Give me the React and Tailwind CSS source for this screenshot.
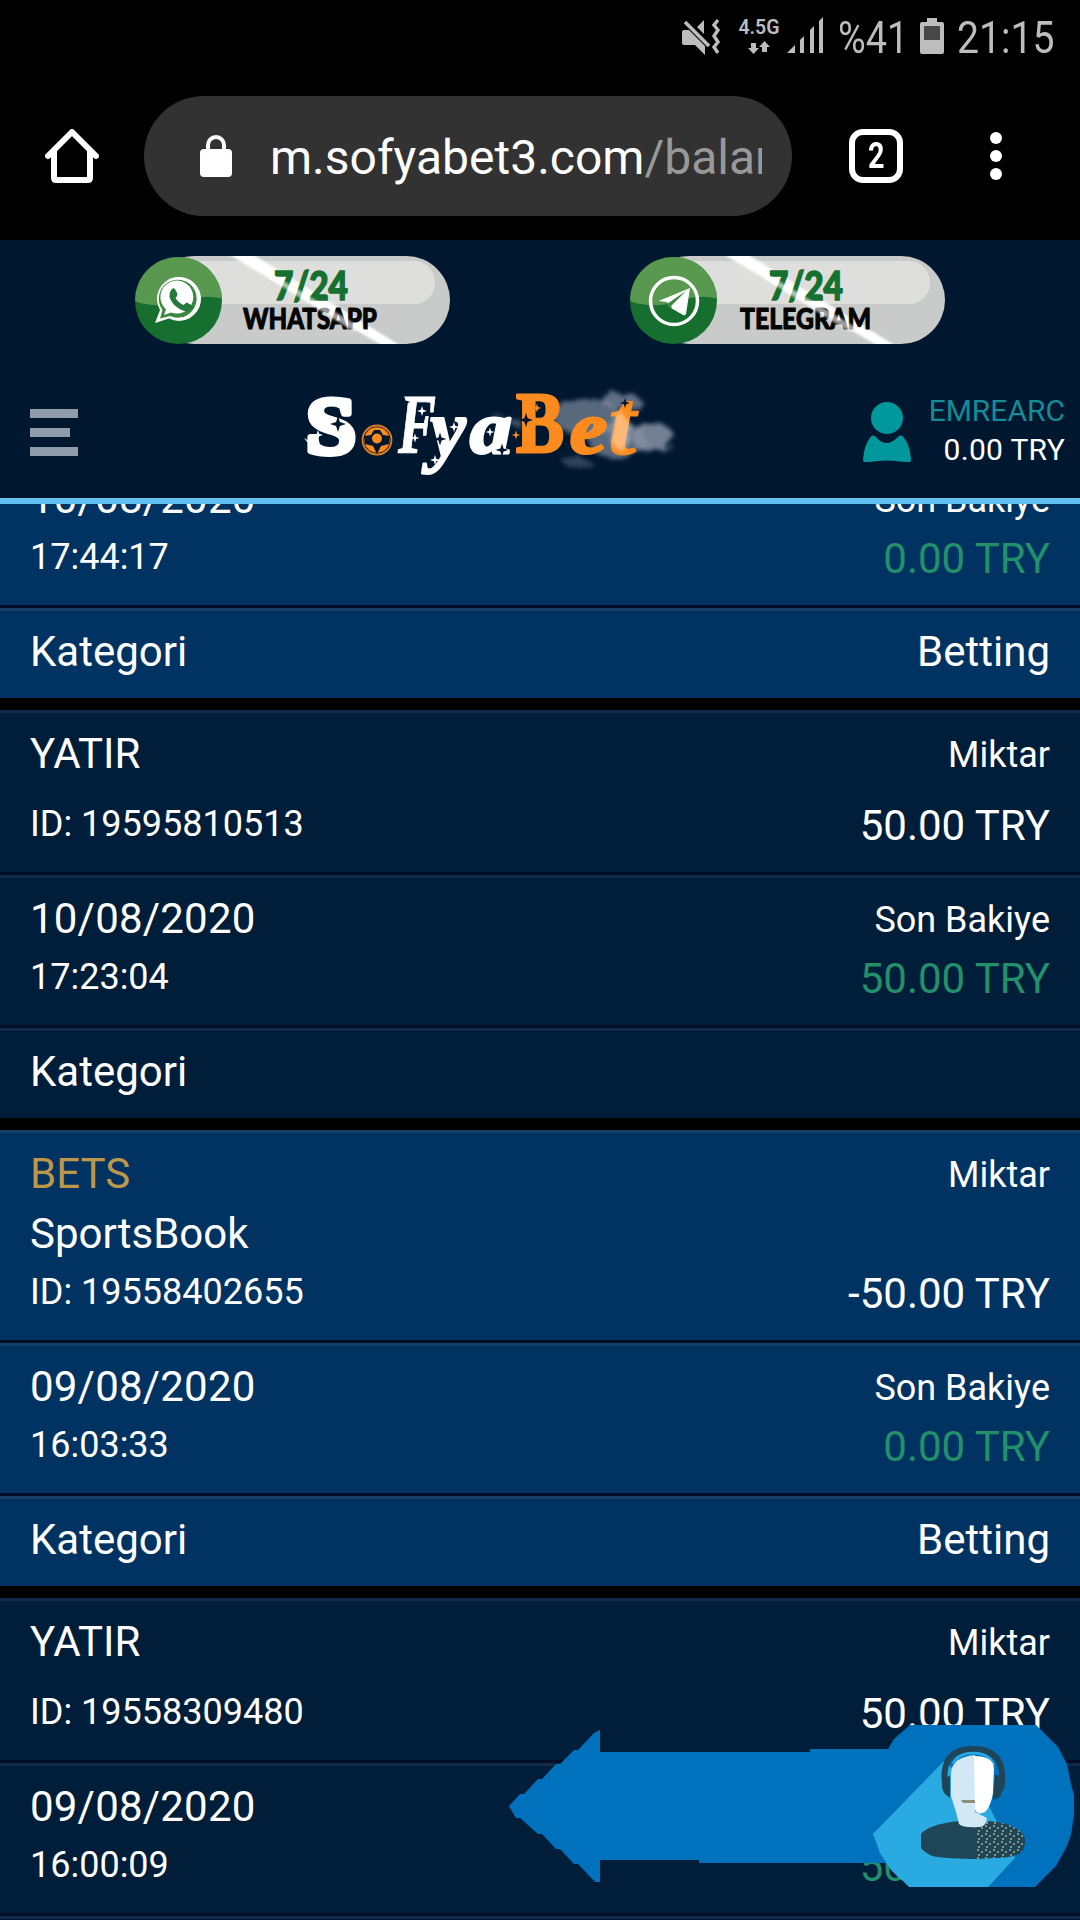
const transactions = [
  { id: 1, rows: ['date', 'category'], date: '10/08/2020', time: '17:44:17', balance: '0.00 TRY', category: 'Betting', highlighted: true },
  { id: 2, rows: ['amount', 'date', 'category'], type: 'YATIR', ref: '19595810513', amount: '50.00 TRY', date: '10/08/2020', time: '17:23:04', balance: '50.00 TRY', category: '' },
  { id: 3, rows: ['amount', 'date', 'category'], type: 'BETS', product: 'SportsBook', ref: '19558402655', amount: '-50.00 TRY', date: '09/08/2020', time: '16:03:33', balance: '0.00 TRY', category: 'Betting', highlighted: true },
  { id: 4, rows: ['amount', 'date', 'category'], type: 'YATIR', ref: '19558309480', amount: '50.00 TRY', date: '09/08/2020', time: '16:00:09', balance: '50.00 TRY', category: '' },
];

function StatusBar() {
  return (
    <div className="flex h-20 shrink-0 items-start bg-black pl-[682px] pt-[18px] text-[#bdbdbd]">
      <svg className="h-[38px] w-[39px] shrink-0" viewBox="0 0 39 38" fill="currentColor">
        <path d="M0 14q0-2 2-2h5l16 16v9l-10-10H2q-2 0-2-2zM15 9l7-7v14z" />
        <path d="M3 4l24 24" stroke="currentColor" strokeWidth="3.5" />
        <path d="M36 2l-4 5 4 5-4 6 4 6-4 5 4 6" fill="none" stroke="currentColor" strokeWidth="3.4" />
      </svg>
      <div className="ml-[18px] flex w-10 shrink-0 flex-col items-center">
        <span className="text-[19.5px] font-semibold leading-[20px]">4.5G</span>
        <svg className="mt-[3px] h-[13px] w-[22px]" viewBox="0 0 22 13" fill="currentColor">
          <path d="M3 2h5v5h3l-5.500 6L0 7h3zM14 11h5V6h3l-5.500-6L11 6h3z" />
        </svg>
      </div>
      <svg className="-mt-px ml-[8px] h-[37px] w-[37px] shrink-0" viewBox="0 0 37 37" fill="currentColor">
        <path d="M0 36l8-8v8zM13 23l4-4v17h-4zM23 13l4-4v27h-4zM32 4l4-4v36h-4z" />
      </svg>
      <span className="ml-[14px] w-[66px] origin-left scale-x-[0.84] whitespace-nowrap text-[45px] leading-[40px]">%41</span>
      <svg className="ml-[16px] h-9 w-6 shrink-0" viewBox="0 0 24 36">
        <path d="M7 0h10v4h5q2 0 2 2v28q0 2-2 2H2q-2 0-2-2V6q0-2 2-2h5z" fill="#bdbdbd" />
        <path d="M4 8h16v14H4z" fill="#484848" />
      </svg>
      <span className="ml-[13px] origin-left scale-x-[0.87] whitespace-nowrap text-[45px] leading-[40px]">21:15</span>
    </div>
  );
}

function BrowserBar() {
  return (
    <div className="flex h-40 shrink-0 items-center bg-black pb-2 pl-[45px]">
      <svg className="h-[54px] w-[54px] shrink-0" viewBox="0 0 54 54" fill="none" stroke="#fff" strokeWidth="6" strokeLinejoin="round" strokeLinecap="round">
        <path d="M3 27L27 3l24 24M9 21v28q0 2 2 2h32q2 0 2-2V21" />
      </svg>
      <div className="ml-[45px] flex h-[120px] w-[648px] items-center rounded-full bg-[#323232] pl-[56px]">
        <svg className="h-[42px] w-8 shrink-0" viewBox="0 0 32 42">
          <path d="M8 16V10a8 8 0 0 1 16 0v6" fill="none" stroke="#fff" strokeWidth="4" />
          <rect y="14" width="32" height="28" rx="4" fill="#fff" />
        </svg>
        <div className="ml-[38px] mt-[3px] w-[492px] overflow-hidden whitespace-nowrap text-[48px] leading-[64px] text-white">
          m.sofyabet3.com<span className="text-[#999]">/balance</span>
        </div>
      </div>
      <div className="ml-[57px] flex h-[54px] w-[54px] items-center justify-center rounded-[14px] border-[6px] border-white">
        <span className="scale-x-[0.8] text-[36px] font-bold leading-none text-white">2</span>
      </div>
      <div className="ml-[87px] flex flex-col gap-1.5">
        <span className="size-3 rounded-full bg-white" />
        <span className="size-3 rounded-full bg-white" />
        <span className="size-3 rounded-full bg-white" />
      </div>
    </div>
  );
}

function ContactBadge({ id, label, labelX, labelWidth, children }) {
  return (
    <svg className="h-[90px] w-[315px] shrink-0" viewBox="0 0 315 90">
      <defs>
        <clipPath id={`${id}-pill`}>
          <rect x="15" y="1" width="300" height="88" rx="44" />
        </clipPath>
        <clipPath id={`${id}-disc`}>
          <circle cx="43.500" cy="45.500" r="43.500" />
        </clipPath>
        <filter id={`${id}-soft`}>
          <feGaussianBlur stdDeviation="1" />
        </filter>
      </defs>
      <rect x="15" y="1" width="300" height="88" rx="44" fill="#c9cbcb" />
      <rect x="40" y="6" width="260" height="43" rx="21" fill="#dededd" />
      <g clipPath={`url(#${id}-pill)`}>
        <path d="M93 -1h24L266 91h-18z" fill="#fff" filter={`url(#${id}-soft)`} />
      </g>
      <text x="139" y="45" textLength="74" lengthAdjust="spacingAndGlyphs" fontFamily="Lato" fontWeight="900" fontSize="39" fill="#16702f" stroke="#16702f" strokeWidth="1.500">7/24</text>
      <text x={labelX} y="74" textLength={labelWidth} lengthAdjust="spacingAndGlyphs" fontFamily="Lato" fontWeight="900" fontSize="28" fill="#050505" stroke="#050505" strokeWidth="1">{label}</text>
      <g clipPath={`url(#${id}-pill)`}>
        <path d="M132 22h10l90 54h-14z" fill="#fff" opacity=".6" filter={`url(#${id}-soft)`} />
      </g>
      <g clipPath={`url(#${id}-disc)`}>
        <path d="M0 0h90v90H0z" fill="#166f2f" />
        <path d="M0 0h90v44q-20-5-36 1T20 50 0 45z" fill="#58994f" />
      </g>
      {children}
    </svg>
  );
}

function WhatsappGlyph() {
  return (
    <g>
      <path d="M25 55a22 22 0 1 1 9 8.500L20 68z" fill="#fff" />
      <path d="M27.500 55a19 19 0 1 1 7.500 6L25 63.500z" fill="#3b8740" />
      <path d="M31 54.500a16.500 16.500 0 1 1 5 3L29 60z" fill="#fff" />
      <path d="M36 35q2-3 4-1l2.500 5q0 2-2 4 3 5 8 7l3-2.500 6 3q1 2-2 4.500-4 3-11-1-8-5-10-12-.500-4 1.500-7z" fill="#25793a" />
    </g>
  );
}

function TelegramGlyph() {
  return (
    <g>
      <circle cx="44" cy="46" r="23.500" fill="none" stroke="#fff" strokeWidth="3.500" />
      <path d="M28.500 46L60 33l-4 26q-1 2-3 1l-12-7-4-6z" fill="#fff" />
      <path d="M37 49l19-13-15 15 1 2-3 0z" fill="#3b8740" />
    </g>
  );
}

function Star({ x, y, size, color }) {
  return (
    <path
      transform={`translate(${x} ${y}) scale(${size})`}
      d="M0-5L1.200-1.200 5 0 1.200 1.200 0 5-1.200 1.200-5 0-1.200-1.200z"
      fill={color}
    />
  );
}

function Logo() {
  return (
    <svg className="h-[95px] w-[380px] shrink-0" viewBox="300 385 380 95">
      <defs>
        <filter id="cloud" x="-20%" y="-20%" width="140%" height="140%">
          <feTurbulence type="fractalNoise" baseFrequency=".06" numOctaves="3" seed="4" result="noise" />
          <feDisplacementMap in="SourceGraphic" in2="noise" scale="14" />
          <feGaussianBlur stdDeviation="2" />
        </filter>
      </defs>
      <g fill="#8793a6" filter="url(#cloud)">
        <ellipse cx="587" cy="418" rx="34" ry="18" opacity=".65" />
        <ellipse cx="622" cy="403" rx="19" ry="8" opacity=".7" />
        <ellipse cx="617" cy="440" rx="30" ry="18" opacity=".65" />
        <ellipse cx="652" cy="438" rx="21" ry="15" opacity=".85" />
        <path d="M488 413l36 10-4 7z" opacity=".5" />
        <ellipse cx="578" cy="464" rx="14" ry="4" opacity=".35" />
      </g>
      <g fontFamily="Liberation Serif" fontWeight="700" fill="#fff" stroke="#fff" strokeLinejoin="round">
        <text x="306" y="454" fontSize="80" textLength="50" lengthAdjust="spacingAndGlyphs" strokeWidth="6">S</text>
        <text x="398" y="454" fontSize="84" fontStyle="italic" textLength="38" lengthAdjust="spacingAndGlyphs" strokeWidth="1">F</text>
        <text x="430" y="457" fontSize="82" fontStyle="italic" textLength="36" lengthAdjust="spacingAndGlyphs" strokeWidth="2">y</text>
        <text x="470" y="454" fontSize="75" fontStyle="italic" textLength="42" lengthAdjust="spacingAndGlyphs" strokeWidth="3">a</text>
      </g>
      {/* tail sweeping left from the S */}
      <path d="M304 439q22 14 38 10l-4 8q-20 1-34-18z" fill="#fff" />
      <g fontFamily="Liberation Serif" fontWeight="700" fill="#fb8b1e" stroke="#fb8b1e" strokeLinejoin="round">
        <text x="516" y="453" fontSize="87" textLength="48" lengthAdjust="spacingAndGlyphs" strokeWidth="3">B</text>
        <text x="570" y="454" fontSize="74" fontStyle="italic" textLength="37" lengthAdjust="spacingAndGlyphs" strokeWidth="3">e</text>
        <text x="608" y="455" fontSize="94" fontStyle="italic" textLength="28" lengthAdjust="spacingAndGlyphs" strokeWidth="1">t</text>
      </g>
      {/* football */}
      <circle cx="377" cy="441" r="14.500" fill="none" stroke="#e27f1e" strokeWidth="1.800" />
      <circle cx="377" cy="441" r="12.800" fill="#fb8b1e" />
      <path d="M377 455l-4-8-8-2-1-8 7-1 3-5h6l3 5 7 1-1 8-8 2z" fill="#001730" />
      <circle cx="377" cy="439.500" r="5" fill="#fb8b1e" />
      <Star x={338} y={425} size={1.6} color="#001730" />
      <Star x={346} y={413} size={1} color="#fff" />
      <Star x={318} y={436} size={1} color="#fff" />
      <Star x={404} y={403} size={1.3} color="#001730" />
      <Star x={422} y={412} size={1} color="#fff" />
      <Star x={415} y={439} size={0.9} color="#fff" />
      <Star x={440} y={440} size={1.3} color="#001730" />
      <Star x={454} y={428} size={1} color="#fff" />
      <Star x={435} y={461} size={1} color="#fff" />
      <Star x={490} y={433} size={0.9} color="#fff" />
      <Star x={502} y={451} size={1.3} color="#001730" />
      <Star x={526} y={421} size={1.4} color="#001730" />
      <Star x={537} y={409} size={0.9} color="#fb8b1e" />
      <Star x={516} y={436} size={0.9} color="#fb8b1e" />
      <Star x={625} y={404} size={1} color="#001730" />
      <ellipse cx="620" cy="432" rx="10" ry="18" fill="#fff" opacity=".4" filter="url(#cloud)" />
    </svg>
  );
}

function SiteHeader() {
  return (
    <header className="flex h-[264px] shrink-0 flex-col border-b-[6px] border-[#63c0ef] bg-[#001730]">
      <div className="flex h-[125px] shrink-0 gap-[180px] pl-[135px] pt-[15px]">
        <ContactBadge id="whatsapp" label="WHATSAPP" labelX="108" labelWidth="134">
          <WhatsappGlyph />
        </ContactBadge>
        <ContactBadge id="telegram" label="TELEGRAM" labelX="110" labelWidth="131">
          <TelegramGlyph />
        </ContactBadge>
      </div>
      <div className="flex h-[133px] items-center pl-[30px] pr-[15px]">
        <div className="mt-0.5 flex w-12 flex-col gap-2.5">
          <span className="h-[9px] w-12 bg-[#919caa]" />
          <span className="h-[9px] w-[40px] bg-[#919caa]" />
          <span className="h-[9px] w-12 bg-[#919caa]" />
        </div>
        <div className="ml-[222px]">
          <Logo />
        </div>
        <svg className="ml-auto h-[60px] w-12 shrink-0" viewBox="0 0 48 60" fill="#00979d">
          <circle cx="24" cy="16" r="16" />
          <path d="M8 34.500q2.500-2 5 .500 10 12 22 0 2.500-2.500 5-.500 7 8 8 23 0 3-3 3-21-4-42 0-3 0-3-3 1-15 8-23z" />
        </svg>
        <div className="-mt-[3px] ml-[18px] flex flex-col items-end text-[30px] leading-[39px]">
          <span className="text-[#128c96]">EMREARC</span>
          <span className="tracking-[0.3px] text-white">0.00 TRY</span>
        </div>
      </div>
    </header>
  );
}

function AmountRow({ item }) {
  return (
    <>
      <div className="flex flex-col justify-between">
        <div className="flex flex-col text-[42px] leading-[60px]">
          <span className={item.type === 'BETS' ? 'text-[#bd9749]' : ''}>{item.type}</span>
          {item.product && <span>{item.product}</span>}
        </div>
        <span className="text-[36px] leading-[57px]">ID: {item.ref}</span>
      </div>
      <div className="flex flex-col items-end justify-between">
        <span className="text-[36px] leading-[62px]">Miktar</span>
        <span className="text-[42px] leading-[54px]">{item.amount}</span>
      </div>
    </>
  );
}

function DateRow({ item }) {
  return (
    <>
      <div className="flex flex-col justify-between">
        <span className="text-[42px] leading-[60px] tracking-[0.2px]">{item.date}</span>
        <span className="text-[36px] leading-[57px]">{item.time}</span>
      </div>
      <div className="flex flex-col items-end justify-between">
        <span className="text-[36px] leading-[62px]">Son Bakiye</span>
        <span className="text-[42px] leading-[54px] text-[#238f6b]">{item.balance}</span>
      </div>
    </>
  );
}

function Transaction({ item }) {
  const tone = item.highlighted ? 'bg-[#003362] border-t-[#123e68]' : 'bg-[#001d39] border-t-[#102a47]';
  const rowClass = `flex shrink-0 justify-between border-t-[3px] px-[30px] pt-[11px] ${tone}`;
  const amountHeight = item.product ? 'h-[213px]' : 'h-[165px]';

  return (
    <section className="flex shrink-0 flex-col text-white">
      {item.rows.includes('amount') && (
        <div className={`${rowClass} ${amountHeight} border-b-[3px] border-b-[#000f26] pb-[19px]`}>
          <AmountRow item={item} />
        </div>
      )}
      <div className={`${rowClass} h-[153px] border-b-[3px] border-b-[#000f26] pb-[19px]`}>
        <DateRow item={item} />
      </div>
      <div className={`${rowClass} h-[90px] text-[42px] leading-[60px]`}>
        <span>Kategori</span>
        <span>{item.category}</span>
      </div>
    </section>
  );
}

function SupportWidget() {
  return (
    <svg className="absolute left-[505px] top-[1720px] h-[172px] w-[572px]" viewBox="505 1720 572 172">
      <defs>
        <pattern id="dither" width="8" height="8" patternUnits="userSpaceOnUse">
          <path d="M0 0h8v8H0z" fill="#1f4558" />
          <path d="M1 1h2v2H1zM5 3h2v2H5zM2 6h2v2H2z" fill="#8b9379" />
        </pattern>
      </defs>
      <path
        d="M509 1806L520 1794H524L538 1779H542L556 1764H560L574 1750H578L594 1733L600 1730V1752H810V1749H888L894 1739L910 1725H1036L1058 1747L1067 1764L1071 1784L1074 1795V1815L1071 1835L1066 1848L1056 1866L1035 1887H910L895 1870L885 1863H699V1860H600V1882H595L578 1864H574L560 1849H556L542 1834H538L520 1818H516Z"
        fill="#0071bc"
      />
      <path d="M944 1761l-71 73 7 19 11 17 8 8 4 3 6 6h79l27-29-30-60z" fill="#29abe2" />
      <path d="M946 1790q-8-41 27-41t28 41" fill="none" stroke="#1f4558" strokeWidth="6" />
      <path d="M942 1778l8-2v22q-8-5-8-12zM995 1775h6l3 10-4 12-7 3z" fill="#1f4558" />
      <path d="M921 1834q8-10 39-13l20 5v33q-34 0-48-3-8-4-11-8z" fill="#1f4558" />
      <path d="M977 1829l12-8q32 3 36 18 1 10-6 15-10 4-25 4l-17 1z" fill="url(#dither)" />
      <path d="M953 1792q2 6 6 8h16M951 1788l6 14" fill="none" stroke="#6f7b6f" strokeWidth="2" />
      <path d="M951 1773q1-16 24-18v57l12 6q-1 9-8 9-16 1-20-3l-3-12-5-16z" fill="#d3e8f5" />
      <path d="M953 1764q5-11 20-11 16 0 21 12" fill="none" stroke="#29abe2" strokeWidth="2.500" />
      <path d="M974 1756q19 0 20 12l-1 25q-2 13-8 19-8 4-10-3z" fill="#fff" />
      <path d="M961 1800h14v3h-12z" fill="#8a8f78" />
    </svg>
  );
}

export default function App() {
  return (
    <div className="relative flex h-[1920px] w-[1080px] flex-col overflow-hidden bg-black font-['Roboto',sans-serif]">
      <StatusBar />
      <BrowserBar />
      <SiteHeader />
      <main className="flex min-h-0 flex-1 flex-col overflow-hidden">
        <div className="-mt-[49px] flex flex-col gap-3">
          {transactions.map((item) => (
            <Transaction key={item.id} item={item} />
          ))}
        </div>
      </main>
      <SupportWidget />
    </div>
  );
}
